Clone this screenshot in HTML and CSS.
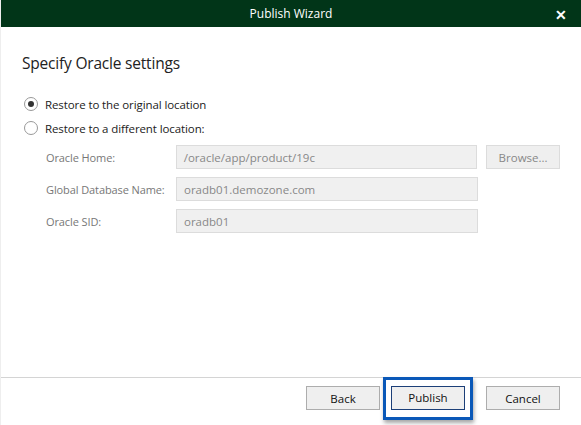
FILE: index.html
```html
<!DOCTYPE html>
<html lang="en">
  <head>
    <meta charset="UTF-8" />
    <title>Publish Wizard</title>
    <link rel="stylesheet" href="styles.css">
  </head>
  <body>
    <div class="window">
      <header class="titlebar">
        <span class="title">Publish Wizard</span>
        <span class="close">&#10005;</span>
      </header>

      <main class="content">
        <h1>Specify Oracle settings</h1>

        <label class="radio">
          <span class="dot checked"></span>
          Restore to the original location
        </label>
        <label class="radio">
          <span class="dot"></span>
          Restore to a different location:
        </label>

        <div class="fields">
          <div class="row">
            <span class="label">Oracle Home:</span>
            <div class="input">/oracle/app/product/19c</div>
            <button class="btn disabled">Browse...</button>
          </div>
          <div class="row">
            <span class="label">Global Database Name:</span>
            <div class="input">oradb01.demozone.com</div>
          </div>
          <div class="row">
            <span class="label">Oracle SID:</span>
            <div class="input">oradb01</div>
          </div>
        </div>
      </main>

      <footer class="footer">
        <button class="btn">Back</button>
        <div class="highlight">
          <button class="btn primary">Publish</button>
        </div>
        <button class="btn">Cancel</button>
      </footer>
    </div>
  </body>
</html>
```

FILE: styles.css
```css
body {
  margin: 0;
  padding: 0;
  background: white;
  font-family: "Open Sans", "Noto Sans", sans-serif;
  color: #333;
}

.window {
  width: 581px;
  height: 425px;
  display: flex;
  flex-direction: column;
  border-left: 1px solid #eee;
  box-sizing: border-box;
  overflow: hidden;
}

.titlebar {
  height: 27px;
  flex-shrink: 0;
  background: #013518;
  color: white;
  display: flex;
  align-items: center;
  justify-content: center;
  position: relative;
  font-size: 12px;
}

.close {
  position: absolute;
  right: 14px;
  top: 5px;
  font-size: 14px;
  font-weight: bold;
}

.content {
  flex: 1;
  padding: 0 21px;
}

h1 {
  font-weight: normal;
  font-size: 15.5px;
  margin: 25px 0 18px;
  color: #222;
  letter-spacing: -0.2px;
}

.radio {
  display: flex;
  align-items: center;
  gap: 7px;
  font-size: 11.5px;
  height: 24px;
  color: #222;
  letter-spacing: -0.1px;
}

.dot {
  width: 14px;
  height: 14px;
  border: 1px solid #999;
  border-radius: 50%;
  box-sizing: border-box;
  margin-left: 2px;
  display: flex;
  align-items: center;
  justify-content: center;
}

.dot.checked::after {
  content: "";
  width: 6px;
  height: 6px;
  border-radius: 50%;
  background: #333;
}

.fields {
  display: flex;
  flex-direction: column;
  gap: 8px;
  margin-top: 5px;
  padding-left: 24px;
}

.row {
  display: flex;
  align-items: center;
  height: 24px;
}

.label {
  width: 130px;
  font-size: 11px;
  color: #777;
  letter-spacing: -0.1px;
}

.input {
  width: 302px;
  height: 24px;
  box-sizing: border-box;
  background: #f0f0f0;
  border: 1px solid #dcdcdc;
  color: #888;
  font-size: 11.5px;
  padding: 0 7px;
  display: flex;
  align-items: center;
}

.btn {
  width: 74px;
  height: 24px;
  font-family: inherit;
  font-size: 11.5px;
  background: #efefef;
  border: 1px solid #adadad;
  color: #111;
  padding: 0;
}

.btn.disabled {
  margin-left: 9px;
  border-color: #dcdcdc;
  color: #888;
}

.footer {
  height: 48px;
  flex-shrink: 0;
  border-top: 1px solid #d4d4d4;
  display: flex;
  align-items: flex-start;
  justify-content: flex-end;
  padding-right: 21px;
  box-sizing: border-box;
}

.footer > .btn {
  margin-top: 8px;
}

.highlight {
  border: 3px solid #0a58b8;
  padding: 5px;
  margin: -1px 13px 0 3px;
  box-shadow: 1px 3px 4px rgba(0, 0, 0, 0.35);
  box-sizing: border-box;
  height: 43px;
}

.btn.primary {
  border-color: #1c3f78;
}
```
